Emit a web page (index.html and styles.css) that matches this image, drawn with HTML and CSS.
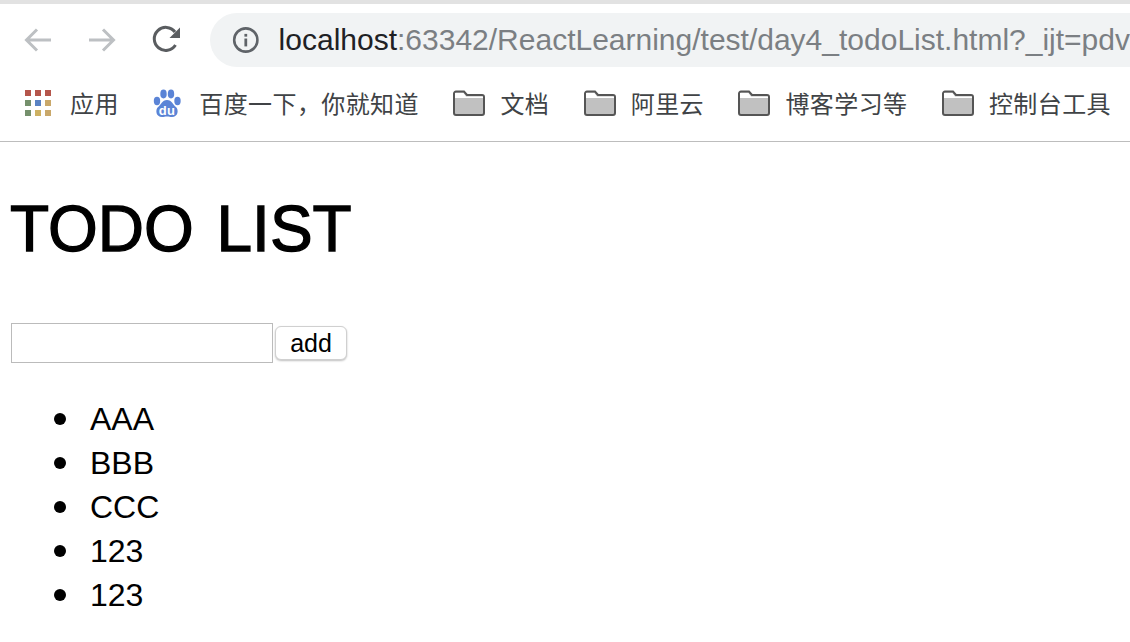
FILE: index.html
```html
<!DOCTYPE html>
<html lang="en">
<head>
    <meta charset="UTF-8">
    <title>TODO LIST</title>
    <link rel="stylesheet" href="styles.css">
</head>
<body>
    <div class="browser-top"></div>
    <div class="toolbar">
        <svg class="nav-icon back" width="30" height="30" viewBox="0 0 30 30"><path d="M28 15H4M14 4.500L3.500 15L14 25.500" fill="none" stroke="#bdc0c3" stroke-width="3"/></svg>
        <svg class="nav-icon forward" width="30" height="30" viewBox="0 0 30 30"><path d="M2 15H26M16 4.500L26.500 15L16 25.500" fill="none" stroke="#bdc0c3" stroke-width="3"/></svg>
        <svg class="nav-icon reload" width="30" height="30" viewBox="0 0 30 30"><path d="M23.500 20A11.500 11.500 0 1 1 23 7" fill="none" stroke="#5a5d60" stroke-width="3"/><path d="M28 2.500V13H17.500Z" fill="#5a5d60"/></svg>
        <div class="address">
            <svg class="info-icon" width="28" height="28" viewBox="0 0 28 28"><circle cx="14" cy="14" r="11.800" fill="none" stroke="#5f6368" stroke-width="2.600"/><rect x="12.600" y="12.500" width="2.800" height="8" fill="#5f6368"/><rect x="12.600" y="7.800" width="2.800" height="2.800" fill="#5f6368"/></svg>
            <span class="url"><span class="host">localhost</span>:63342/ReactLearning/test/day4_todoList.html?_ijt=pdv</span>
        </div>
    </div>
    <div class="bookmarks">
        <div class="bookmark">
            <svg width="28" height="28" viewBox="0 0 28 28">
                <rect x="1" y="1" width="6" height="6" fill="#b5564b"/><rect x="11" y="1" width="6" height="6" fill="#b5564b"/><rect x="21" y="1" width="6" height="6" fill="#b5564b"/>
                <rect x="1" y="11" width="6" height="6" fill="#75906c"/><rect x="11" y="11" width="6" height="6" fill="#5a83c4"/><rect x="21" y="11" width="6" height="6" fill="#c9a86a"/>
                <rect x="1" y="21" width="6" height="6" fill="#75906c"/><rect x="11" y="21" width="6" height="6" fill="#cdb162"/><rect x="21" y="21" width="6" height="6" fill="#c9a86a"/>
            </svg>
            <span>应用</span>
        </div>
        <div class="bookmark">
            <svg width="28" height="30" viewBox="0 -1 28 30">
                <ellipse cx="4" cy="12" rx="3.200" ry="4.200" fill="#5b84d6"/><ellipse cx="10.500" cy="5" rx="3.200" ry="4.400" fill="#5b84d6"/><ellipse cx="18" cy="5" rx="3.200" ry="4.400" fill="#5b84d6"/><ellipse cx="24.500" cy="12" rx="3.200" ry="4.200" fill="#5b84d6"/>
                <path d="M14 11C19 11 20 16 23 18C26 21 25 28 19 28C17 28 16 27.500 14 27.500C12 27.500 11 28 9 28C3 28 2 21 5 18C8 16 9 11 14 11Z" fill="#5b84d6"/>
                <text x="14" y="26" text-anchor="middle" class="du">du</text>
            </svg>
            <span>百度一下，你就知道</span>
        </div>
        <div class="bookmark folder-item">
            <svg width="32" height="26" viewBox="0 0 32 26"><path d="M1 3.500A2 2 0 0 1 3 1.500H11L14 5H29A2 2 0 0 1 31 7V23A2 2 0 0 1 29 25H3A2 2 0 0 1 1 23Z" fill="#c1c1c1" stroke="#555" stroke-width="2"/><path d="M2 3H10.500L13 6.500H30V8H2Z" fill="#fff"/></svg>
            <span>文档</span>
        </div>
        <div class="bookmark folder-item">
            <svg width="32" height="26" viewBox="0 0 32 26"><path d="M1 3.500A2 2 0 0 1 3 1.500H11L14 5H29A2 2 0 0 1 31 7V23A2 2 0 0 1 29 25H3A2 2 0 0 1 1 23Z" fill="#c1c1c1" stroke="#555" stroke-width="2"/><path d="M2 3H10.500L13 6.500H30V8H2Z" fill="#fff"/></svg>
            <span>阿里云</span>
        </div>
        <div class="bookmark folder-item">
            <svg width="32" height="26" viewBox="0 0 32 26"><path d="M1 3.500A2 2 0 0 1 3 1.500H11L14 5H29A2 2 0 0 1 31 7V23A2 2 0 0 1 29 25H3A2 2 0 0 1 1 23Z" fill="#c1c1c1" stroke="#555" stroke-width="2"/><path d="M2 3H10.500L13 6.500H30V8H2Z" fill="#fff"/></svg>
            <span>博客学习等</span>
        </div>
        <div class="bookmark folder-item">
            <svg width="32" height="26" viewBox="0 0 32 26"><path d="M1 3.500A2 2 0 0 1 3 1.500H11L14 5H29A2 2 0 0 1 31 7V23A2 2 0 0 1 29 25H3A2 2 0 0 1 1 23Z" fill="#c1c1c1" stroke="#555" stroke-width="2"/><path d="M2 3H10.500L13 6.500H30V8H2Z" fill="#fff"/></svg>
            <span>控制台工具</span>
        </div>
    </div>

    <div class="page">
        <h1>TODO LIST</h1>
        <div class="add-form">
            <input type="text" class="todo-input">
            <button class="add-btn">add</button>
        </div>
        <ul class="todo-list">
            <li>AAA</li>
            <li>BBB</li>
            <li>CCC</li>
            <li>123</li>
            <li>123</li>
        </ul>
    </div>
</body>
</html>
```

FILE: styles.css
```css
html, body {
    height: 100%;
}

body {
    margin: 0;
    overflow: hidden;
    background: #fff;
    color: #000;
    font-family: 'Liberation Sans', Arial, sans-serif;
}

.browser-top {
    height: 4px;
    background: #e2e2e2;
}

.toolbar {
    display: flex;
    align-items: center;
    height: 72px;
    padding-left: 23px;
}

.nav-icon {
    flex: none;
}

.forward {
    margin-left: 34px;
}

.reload {
    margin-left: 35px;
}

.address {
    flex: 1;
    min-width: 0;
    display: flex;
    align-items: center;
    height: 54px;
    margin-left: 28px;
    padding-left: 22px;
    border-radius: 27px 0 0 27px;
    background: #f1f3f4;
    overflow: hidden;
}

.url {
    margin-left: 19px;
    font-size: 30px;
    color: #7b7f83;
    white-space: nowrap;
}

.host {
    color: #202124;
}

.bookmarks {
    display: flex;
    align-items: center;
    gap: 34.500px;
    height: 53px;
    padding: 0 0 12px 24px;
    border-bottom: 1px solid #bdbdbd;
    font-family: 'Noto Sans CJK SC', 'Liberation Sans', sans-serif;
    font-size: 24px;
    letter-spacing: 0.4px;
    color: #404346;
    white-space: nowrap;
}

.bookmark {
    display: flex;
    align-items: center;
    gap: 18px;
}

.folder-item {
    gap: 15px;
}

.du {
    font-family: 'Liberation Sans', Arial, sans-serif;
    font-size: 13px;
    font-weight: bold;
    fill: #fff;
}

.page {
    padding-left: 10px;
}

h1 {
    margin: 44px 0 0;
    font-size: 64px;
    font-weight: normal;
    line-height: 86px;
    word-spacing: 5px;
    -webkit-text-stroke: 1.300px #000;
}

.add-form {
    display: flex;
    align-items: center;
    margin: 51px 0 0 1px;
}

.todo-input {
    box-sizing: border-box;
    width: 262px;
    height: 40px;
    margin: 0;
    border: 1px solid #bbb;
    background: #fff;
}

.add-btn {
    box-sizing: border-box;
    width: 72px;
    height: 34px;
    margin-left: 2px;
    padding: 0;
    border: 1px solid #d0d0d0;
    border-radius: 6px;
    background: #fff;
    box-shadow: 0 1px 2px rgba(0, 0, 0, 0.25);
    font-family: 'Liberation Sans', Arial, sans-serif;
    font-size: 25px;
    color: #000;
}

.todo-list {
    margin: 34px 0 0;
    padding-left: 44px;
    list-style: none;
    font-size: 32px;
    line-height: 44px;
}

.todo-list li {
    display: flex;
    align-items: center;
}

.todo-list li::before {
    content: "";
    width: 12px;
    height: 12px;
    margin-right: 24px;
    border-radius: 50%;
    background: #000;
}
```
